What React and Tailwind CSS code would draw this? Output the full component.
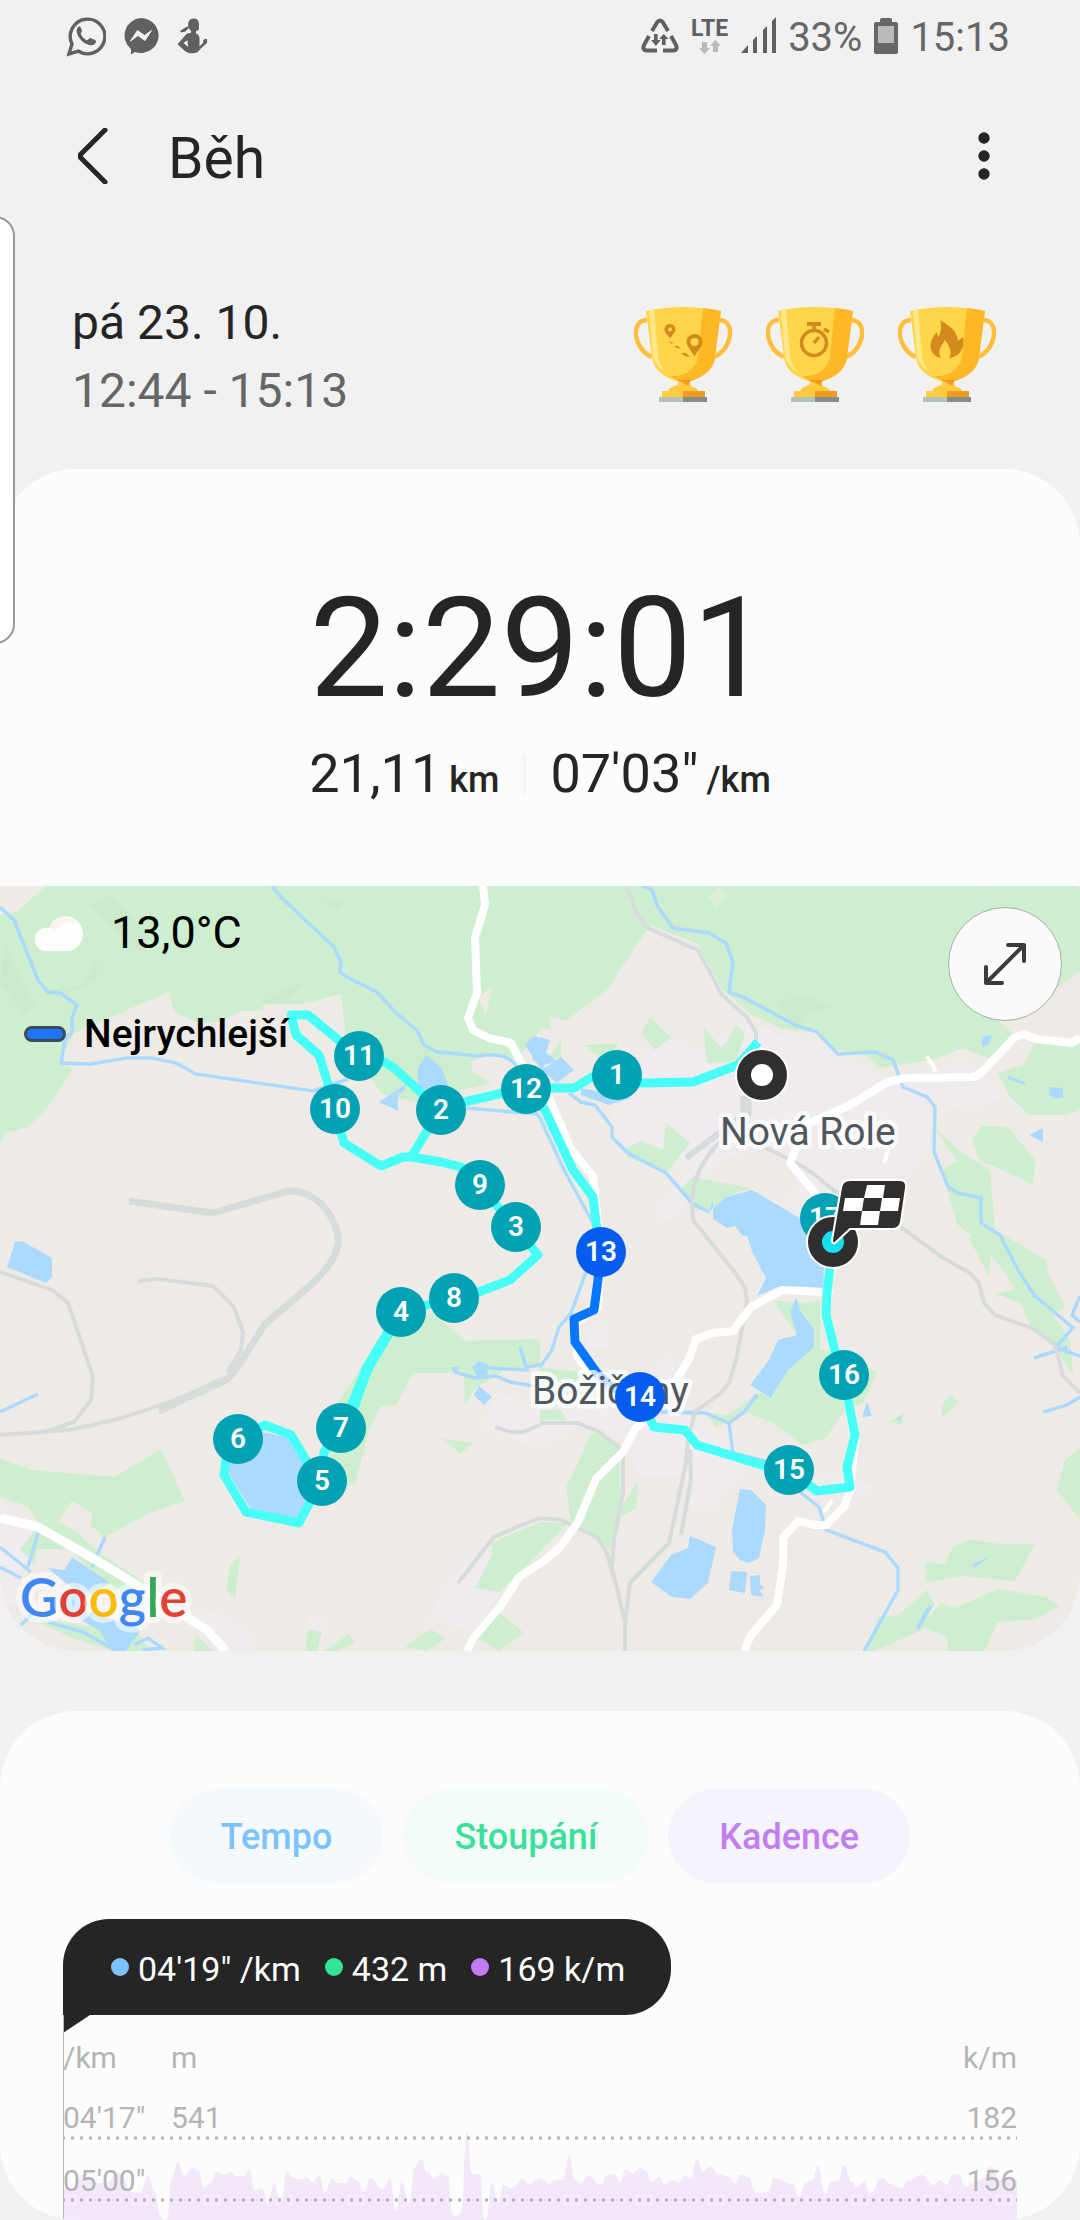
import React from 'react';

const markers = [
  { n: 11, x: 358, y: 1056 },
  { n: 10, x: 334, y: 1109 },
  { n: 2, x: 440, y: 1110 },
  { n: 12, x: 525, y: 1089 },
  { n: 1, x: 616, y: 1075 },
  { n: 9, x: 479, y: 1185 },
  { n: 3, x: 515, y: 1227 },
  { n: 4, x: 400, y: 1312 },
  { n: 8, x: 453, y: 1298 },
  { n: 7, x: 340, y: 1428 },
  { n: 6, x: 237, y: 1439 },
  { n: 5, x: 321, y: 1481 },
  { n: 13, x: 600, y: 1252, fast: true },
  { n: 14, x: 639, y: 1397, fast: true },
  { n: 15, x: 788, y: 1470 },
  { n: 16, x: 843, y: 1375 },
  { n: 17, x: 824, y: 1218 },
];

const cadence = [
  63, 2188, 71, 2188, 83, 2175, 96, 2183, 105, 2183, 119, 2173, 133, 2192, 140, 2193, 148, 2176, 155, 2192, 160, 2215, 164, 2220,
  167, 2219, 172, 2177, 178, 2162, 184, 2175, 193, 2168, 198, 2170, 204, 2188, 210, 2183, 217, 2172, 224, 2175, 230, 2172, 236, 2176,
  244, 2176, 249, 2170, 255, 2190, 262, 2189, 268, 2203, 274, 2184, 281, 2202, 287, 2171, 293, 2178, 301, 2179, 306, 2177, 313, 2182,
  319, 2175, 325, 2192, 332, 2179, 339, 2183, 345, 2183, 351, 2177, 357, 2180, 364, 2192, 370, 2177, 383, 2189, 390, 2179, 396, 2211,
  402, 2182, 409, 2203, 415, 2167, 421, 2159, 427, 2172, 434, 2179, 442, 2173, 448, 2176, 452, 2212, 455, 2217, 461, 2213, 467, 2132,
  472, 2174, 480, 2174, 484, 2219, 486, 2219, 492, 2183, 498, 2203, 504, 2185, 511, 2188, 523, 2179, 529, 2184, 540, 2178, 550, 2184,
  555, 2180, 563, 2180, 569, 2156, 575, 2180, 581, 2183, 588, 2176, 601, 2185, 607, 2175, 614, 2174, 620, 2182, 626, 2169, 633, 2173,
  640, 2168, 646, 2171, 652, 2182, 659, 2177, 665, 2184, 672, 2180, 678, 2183, 685, 2176, 691, 2179, 697, 2159, 703, 2172, 710, 2167,
  719, 2174, 729, 2177, 735, 2183, 741, 2175, 748, 2177, 756, 2192, 762, 2193, 768, 2192, 774, 2178, 793, 2184, 799, 2197, 806, 2182,
  812, 2180, 818, 2166, 825, 2194, 831, 2182, 838, 2181, 844, 2165, 852, 2182, 857, 2187, 864, 2181, 870, 2193, 882, 2178, 891, 2184,
  902, 2188, 908, 2181, 921, 2175, 934, 2185, 940, 2180, 947, 2185, 953, 2174, 959, 2175, 965, 2187, 976, 2182, 984, 2177, 991, 2166,
  1000, 2180, 1005, 2178, 1017, 2180,
];

const areaPath = (values) => {
  let d = `M${values[0]} 2220V${values[1]}`;
  for (let i = 2; i < values.length; i += 2) {
    const mid = (values[i - 2] + values[i]) / 2;
    d += `C${mid} ${values[i - 1]} ${mid} ${values[i + 1]} ${values[i]} ${values[i + 1]}`;
  }
  return `${d}V2220Z`;
};

const WhatsApp = () => (
  <svg width="40" height="42" viewBox="66 16 40 42" fill="none" aria-hidden="true">
    <path d="M69 55l3-10a17.300 17.300 0 1 1 6.500 7.200z" stroke="#606060" strokeWidth="3.400" />
    <path d="M78 28.500c-2 1.700-1.800 5 .3 8.700 3 5.200 7.500 8.500 12.500 9 2.500.2 5-1.500 5.200-3.500.1-1-.5-1.500-1.500-2l-3.600-1.500c-1-.4-1.500 0-2.200.9-.8 1-1.500 1.400-2.500.8-2.300-1.300-4-3.200-5.200-5.500-.5-1 0-1.500.5-2.300.5-.7.6-1.200.2-2l-1.300-3c-.6-1.200-1.300-1-2.400.4z" fill="#606060" />
  </svg>
);

const Messenger = () => (
  <svg width="38" height="40" viewBox="121 17 38 40" aria-hidden="true">
    <path d="M140 19a17.700 17.500 0 1 1-6 34l-4 2.500v-5.500A17.700 17.500 0 0 1 140 19z" fill="#606060" />
    <path d="M129.500 42l7-10.500 7 5 7-5-6.500 10-7-5z" fill="#f1f1f1" stroke="#f1f1f1" strokeWidth="1" strokeLinejoin="round" />
  </svg>
);

const Athlete = () => (
  <svg width="32" height="38" viewBox="178 18 32 38" aria-hidden="true" fill="#606060">
    <path d="M195.500 19.500c4 0 5.500 2.500 5.500 5.500v4c0 2-1 3-3 3v2.500c2.500 1 3.500 2.500 3.500 5v8l4-4-.6-2 2.200-1.700 2 .5v3.500l-7 6.500c-1.500 2.500-4 4-7.500 4s-5.500-.5-8-2.500l-7-6.500 9-10.500 4.500-1v-2c-2-1-3-3-3-6 0-3.500 2-6.300 5.400-6.300z" />
    <path d="M182 32l6-4 4-.5-4.500 5-4.500 1z" />
    <path d="M185.500 44l3.800-3 .9 7z" fill="#f1f1f1" />
  </svg>
);

const DataSaver = () => (
  <svg width="38" height="36" viewBox="638 19 38 36" fill="none" aria-hidden="true">
    <g stroke="#606060" strokeWidth="4">
      <path d="M649 32l5-8.500q3-4 6 0l5 8.500" />
      <path d="M646 37l-5 9q-2 5 2.500 5.500H654" />
      <path d="M668 37l5 9q2 5-2.500 5.500H660" />
    </g>
    <path d="M651 35h3.600v6h3l-4.700 6-4.800-6h2.900zM659 46h3.600v-6h3l-4.800-5-4.700 5h2.900z" fill="#606060" />
  </svg>
);

const Signal = () => (
  <svg width="36" height="38" viewBox="740 17 36 38" fill="#606060" aria-hidden="true">
    <path d="M741 53l7-8v8zM753 40l4-4v17h-4zM763 30l4-4v27h-4zM772 21l4-4v36h-4z" />
  </svg>
);

const Battery = () => (
  <svg width="24" height="36" viewBox="874 18 24 36" aria-hidden="true">
    <path d="M880 22v-2q0-2 2-2h8q2 0 2 2v2h4q2 0 2 2v28q0 2-2 2h-20q-2 0-2-2V24q0-2 2-2z" fill="#666" />
    <path d="M878 26h16v17h-16z" fill="#bababa" />
  </svg>
);

const Trophy = ({ label, children }) => (
  <svg width="98" height="96" viewBox="0 0 98 96" role="img" aria-label={label}>
    <path d="M13 13C-4 13-1 42 18 50M85 13c17 0 14 29-5 37" fill="none" stroke="#ffbf3c" strokeWidth="4.500" />
    <path d="M44 72h12q-2 7 4 9H40q5-2 4-9z" fill="#ffb726" />
    <path d="M42 72l14 9H40q5-2 4-7z" fill="#ffd54a" />
    <path d="M12 4Q49-4 87 4L81 50C80 63 68 71 56 74H43C31 71 19 63 18 50z" fill="#ffd54a" />
    <path d="M69 1q10 1 18 3L81 50C80 63 68 71 56 74H44l-8-5C53 70 63 60 64 49z" fill="#ffb726" />
    <path d="M15 3l5-.5 4 46q1 10 9 17-12-6-14-17z" fill="#ffe88c" />
    <path d="M43 73h14l-3 5z" fill="#ee9a22" />
    <path d="M34 84q2-5 11-6 5-1 10 1 8 1 9 5z" fill="#ffc93f" />
    <path d="M28 84h21v6H28z" fill="#ffcc3d" />
    <path d="M49 84h22v6H49z" fill="#f29a22" />
    <path d="M25 90h24v5H25z" fill="#b5c0bb" />
    <path d="M49 90h24v5H49z" fill="#858d88" />
    {children}
  </svg>
);

const Map = () => (
  <svg viewBox="0 886 1080 765" className="block h-auto w-full" role="img" aria-label="Mapa trasy">
    <path d="M0 886h1080v765H0z" fill="#eeebe6" />

    {/* Built-up areas */}
    <g fill="#efebef">
      <path d="M750 1022l33 15 32 3 64 36 19 0 38-6 27-11 38 31v8l-34 15-38-15v45l-18 32-46 5-21 23-31 27-17 5-38-21-61-20-28 28-15-6 35-48-64-15-14-35 31-35v-28l24-18 28 15z" />
      <path d="M953 1030h12l-7 23h-9z" />
      <path d="M540 1407l83-7 10-23 38-20 12 25-19 28 31 7 24 16 34 34-20 16-21 27-20 3-7-38-45 2-17-40-38-14-45 27-58-23 17-34z" />
      <path d="M585 1330l20-7 4 24-21 3zM815 1473l61 12-26 15-8-12z" />
      <path d="M482 1550l10 3 7 40-24 40-48-13 21-37zM193 1617l20-7 35 20 9 21h-30zM310 1613l22 9-12 21-12-14zM0 1505l17 12 33 10-14 25-19 20 4 30-21 5z" />
    </g>
    <path d="M726 1157l38-7 24 13 12 27-19 13-31-13-28-10-27 13 12-22z" fill="#eeebe6" />

    {/* Forests and parks */}
    <g fill="#cdeecf">
      <path d="M47 886L26 903 17 912 0 914V1145l5-12 23-6 20-20 24-37-10-12 12-25 46-20 49-21 5 20 21 10h24l22-11h22v-7h40l38-10 5 40 2 22 17 13 17 25 33 8 80-20-22-8-2-12 14-6 32 3 23-28v-2h10v-12l17 3 40-30 43-65 48 19 24 45 28 25 33 15 32 3 18 17 32 5 14 14 19-3 38-6 27-11 30 12 19-27-33-30 20-25 55 12 44-32v-6l-13-9 13-8v-57l-19 12-5-25 4-14h-55l-4 4-13 7-7 13-20 12-8-5 9-14-4-14z" />
      <path d="M1080 1040l-44-2-12 27-26 8 12 24 19 18h38l13-5z" />
      <path d="M650 1018l21 19-16 13-13-17zM703 1027l18 21 7-8 8-15 9 8-9 29-29 1zM583 1045l36-1-14 16zM561 1039v18l-14 4zM666 1123l24 20-23 29-41-15v-9l16-7 21 9zM693 1177l57 11-24 9-17 15-16-5-14-17z" />
      <path d="M934 1127l24 23 32 20 5 60 51 30 2 13 17 34-12 8 17 25 3 35-10-15-13-20-18-12-12-26-23-8 19-5-14-20-20-25-25-20-15-55 16-8zM977 1228l14 15-2 34-20-39zM972 1140l10-14 26 1 27 33-2 25-35-17-19-8z" />
      <path d="M382 1335l50-23 33 29 75-2v27l-37 5-28 18-10 15-1-30-11-1h-40l-17 32-14 1-12 21-15 58-22 2-13-57z" />
      <path d="M540 1367l45 6 20 12-18 10-47-15zM540 1410h21l5 10h-26zM441 1438l32 5-12 11z" />
      <path d="M592 1432l27 11 2 60-9 49-20-19-21-11-5-34zM540 1522l28 1-28 29-41 40-24-4 17-33v-12zM603 1503l19 4 16-27-2 29-25 12zM499 1612l25 21-25 18-24-14zM430 1629l16 9-18 13-23-4zM348 1634l7 8-18 9h-13zM308 1629l14 3-5 19h-12zM240 1556l-5 43-9-9 4-25zM196 1635l17 16h-20z" />
      <path d="M0 1458l31 12 84 7 46-28 24 52-33 11-47 25-15-12 3-12-21-12-14 20 19 12 22 19 71 48h-47l-54-51h-32l-2 17-15-17 20-25-12-18-38-12z" />
      <path d="M26 1617l112 16 13 18h-38l-40-13z" />
      <path d="M774 1300l30 3 16-3v50l16 2 31 15 10 5-13 30-21 10-17 26-24 7-28-22-27-10-31 14-11-14 24 2 28-22 17 3 26-55z" />
      <path d="M1080 1448l-15 12-8 30 23 30zM950 1394l8 8-15 16-2-11zM888 1423l16-11-2 12zM996 1294l21-5 12 24 41 34 3 28-23-35-18-12-12-26z" />
      <path d="M969 1539l31 5h35l-20 37-55-5-35 7 1-21 19 2 8-17zM879 1617l19-2 29-25 7 13-12 27-47 21h-10zM941 1603l14 5 43-19 48 8 14 9-24 13-38 3-14 29h-36l-1-14-28-11z" />
    </g>
    <path d="M492 986l-6 30-7-18zM471 1070l14-6 32 3-18 21z" fill="#eeebe6" />
    <path d="M708 897l10-10 11 6-13 15z" fill="#dbeedb" />
    <g fill="#c8e8ca" opacity=".6">
      <path d="M90 905l20-10 38 40-10 15zM83 985l14-25v20l-39 18-10-8zM5 945l30 60-10 10-25-30zM260 1005l25-18 20-4-15 15zM320 900h24l-5 10zM776 1000l35-2 20 9-25 6-10 18z" />
    </g>

    {/* Lakes and ponds */}
    <g fill="#acdaff">
      <path d="M709 1212l17-15 26-7 46 27 27 26-2 46-45-2-21 9 9-18-6-11-8-16-5-15-4 0-8-10-8 2-14-9v-20z" />
      <path d="M796 1298l5 14 13 18v17l-26 23-17 28-21-13 19-25 9-20 19-5-7-23zM740 1489l11 1 15 15-1 25-6 28-10 5-9-3-7-8-1-22zM690 1536l26 11-8 36-18 16-18-2-21-15 20-27 17-7zM731 1571l16 1-2 21-16-3zM750 1576l10-1v9l4 4-5 2 5 7-13-2z" />
      <path d="M262 1432l28 6 31 42-9 28-16 12-46-12-26-42zM22 1241l30 17v19l-6 6-39-16 8-25zM426 1055l15 12 9 22-30 10-3-29z" />
      <path d="M379 1102l27-18-2 7-6 3v17zM525 1045l9-9 6 2v22l5 8 16-11 13 13-17 13-17-15zM581 1088l50 10-22 7-28-10zM540 1037l10 3-4 12 10 9-14 5-10-6z" />
      <path d="M982 1037l10-2-4 10-6 2zM1008 1076l17 6v3l-17-6zM1050 1087l13 1v9l-7 2-7-4zM1029 1135l14-7v14zM867 1402l5 14-10 1zM972 1564l17-7-14 10zM934 1604l-15 26-3-2 10-20zM472 1367l7-6 10 4-2 10-8 5zM479 1386l13 11-8 8-10-10zM451 1367h8l-4 8z" />
      <path d="M48 1568l17 2 7-13 38 26-22 13-2 14 55 20-15 21h-14l-12-20-36-21 8-22zM896 1420l6-5-2 5z" />
    </g>

    {/* Rivers */}
    <g fill="none" stroke="#acdaff" strokeWidth="3.500">
      <path d="M0 907l14 13 24 60 10 12 12 1 17 12-5 13v14l-7 8-4 23 30 1 35-6 26 0 24 5 20 11 117 17 35-12" />
      <path d="M272 886l10 12 52 49 7 15-1 10 7 5 30 15 19 21 21 17 7 15 13 7 43 4q25-5 37 10" />
      <path d="M467 1108l70 6 3 4 24 52 31 57 0 23-10 25-14 38-12 14-7 23-12 17" />
      <path d="M643 886l9 4 5 15 16 23 36 5 17 10 7 19-4 30 14 5 52 28 22 7 21 22 37-2 18 8 10 27 24 10 8 10-1 45 14 35 10 6 23 5v25l19 12 18 35 16 25 39 33-17 19 41 16M1034 1358l33-11M1080 1296l-8 19 8 7M1043 1412l24-7 13-8" />
      <path d="M569 1093l12 9 14 3 17 22v10l16 16 38 20 26 30 17 9" />
      <path d="M661 1412l44 1 24 10 14-10 14-18M729 1423l4 30 55 14M800 1492l19 15 7 23 59 22 13 16v22l-34 61M0 1412l38-18" />
      <path d="M455 1372l20 6 21-2 14 6 30 5M489 1368l38 2-7-23M527 1367l13-2M0 1547l31 25M0 1567l21 11M38 1533l-10 34M105 1537l-13 30M21 1625l13-13M48 1622l35 10 32 18M134 1645l14-7 14 10-20 2" />
    </g>

    {/* Railways */}
    <g fill="none" stroke="#d6dbdc" strokeWidth="4">
      <path d="M626 886l7 16 3 11 12 15 50 22 24 45 25 22 9 16v10M746 1117v-8M746 1120q-50 35-54 77l1 23 40 50 12 17 2 16-11 57-7 23-8 10-26 19-7 28-2 23-17 80-39 40-5 40v28M690 1450l1 30-10 55" />
      <path d="M764 1147l28 14q15 6 41 29l72 40 38 28 26 14 10 11 5 20 11 12 37 13 23 17 8 31 17 17" />
      <path d="M540 1423h38l21 9 24 18v43l-9 47-2 27 13 56M540 1518l21 2 36 17 10 16 7 25M540 1518l-23 9-23 10-36 46" />
      <path d="M0 1272l52 18 16 13 25 74-2 23-17 22-29 10M138 1281l20-2 55 7 21 21 9 25-2 18-14 23M495 1427l15 5 13 0 17-7" />
      <path d="M0 1435l69-5q80-15 155-52" />
      <path d="M686 1158l60-45" strokeWidth="6" />
      <path d="M746 1096v20" strokeWidth="11" />
      <path d="M129 1201l84 12 75-22q22-1 38 18 14 20 12 35-3 20-32 45l-41 35-27 42q-5 10-14 15l-65 30" strokeWidth="7" />
    </g>

    {/* Roads */}
    <g fill="none" stroke="#fff" strokeWidth="8" strokeLinejoin="round">
      <path d="M483 886l2 19-10 33 2 55-9 25 5 12 16 8 22 5 12 24 24 26 24 56 22 27 8 76-3 55-22 16 1 33 25 34" />
      <path d="M1080 1038l-8 5-36-4-12-5-9 3-34 36-7 4-69 1-17 4-38 23-45 20-15 38 25 30 22 50-10 49-45-2-31 17-18 24-20 2-17 6-7 20-14 23-21 29-19 18-12 23-27 27-18 43-17 24-17 15-25 16-19 30-26 30-7 14" />
      <path d="M829 1290l-4 25 18 65 12 60-5 50-6 17-18 18h-11l-17-4-15 17v27l-6 40-26 30-7 16" />
      <path d="M0 1518l38 9 58 33 49 30 62 40 19 21" strokeWidth="9" />
      <path d="M927 1056l9 15M888 1150l-4 13M832 1500l-8 12" strokeWidth="4" />
    </g>

    {/* Route */}
    <g fill="none" stroke="#48fff7" strokeWidth="9" strokeLinejoin="round">
      <path d="M758 1042l-20 23-45 17-50 1h-27l-24-6-18 11h-49l-39 9-18 4-28 9-29 47" />
      <path d="M440 1110l-47-43-9-5-26-6-50-41h-17l5 20 23 20 10 32 5 22 10 34 37 23 22-9 8 0 30 5 20 5 18 18 36 42 23 28-28 25-31 12-26 6-53 14-32 55-13 38-15 23-16 24-3 29-22 42-53-11-22-37 2-15 11-21 28-14 26 10 17 28 13 18" />
      <path d="M525 1089l20 21 28 60 20 27 4 33 4 22M639 1397l15 30 31 3 12 15 65 20 26 5 29 21 33-4-3-20 8-32-7-35-7-25-15-60 1-22 3-26v-25" />
      <path d="M396 1320l-28 47-17 42" strokeWidth="11" />
    </g>
    <path d="M600 1252l-2 28-4 30-20 9 1 23 22 31 14 14 28 10" fill="none" stroke="#0876ff" strokeWidth="9" strokeLinejoin="round" />

    <g fill="#50585f" stroke="#fff" strokeOpacity=".75" strokeWidth="9" strokeLinejoin="round" className="font-[Roboto,sans-serif]" style={{ paintOrder: 'stroke' }}>
      <text x="720" y="1145" fontSize="39">Nová Role</text>
      <text x="532" y="1404" fontSize="39">Božičany</text>
    </g>

    {/* Kilometre markers */}
    {markers.map((m) => (
      <g key={m.n}>
        <circle cx={m.x + 1} cy={m.y} r="25" fill={m.fast ? '#055cef' : '#00a2b3'} />
        <text x={m.x + 1} y={m.y + 9} textAnchor="middle" fontSize="28" fill="#fff" className="font-[Roboto,sans-serif] font-semibold">{m.n}</text>
      </g>
    ))}

    <circle cx="762" cy="1075" r="18" fill="#fff" stroke="#fff" strokeWidth="18" />
    <circle cx="762" cy="1075" r="18" fill="#fff" stroke="#2f2f2f" strokeWidth="14" />
    <circle cx="833" cy="1242" r="18" stroke="#fff" strokeWidth="18" />
    <circle cx="833" cy="1242" r="18" fill="#18def0" stroke="#2f2f2f" strokeWidth="14" />
    <path d="M850 1180h50q7 0 6 8l-5 34q-1 7-8 7h-43l-15 14q-3 1-3-3l9-52q1-8 9-8z" fill="#2f2f2f" stroke="#fff" strokeWidth="2" />
    <path d="M867 1185h18l-2 13h17l-2 13h-18l-2 14h-18l2-14h-19l2-13h19zM864 1198l-2 13h18l2-13z" fill="#fff" fillRule="evenodd" />

    <text x="20" y="1617" fontSize="53" stroke="#fff" strokeOpacity=".55" strokeWidth="12" strokeLinejoin="round" className="font-[Lato,sans-serif] font-semibold" style={{ paintOrder: 'stroke' }}>
      <tspan fill="#4285f4">G</tspan>
      <tspan fill="#e34133">o</tspan>
      <tspan fill="#fabb05">o</tspan>
      <tspan fill="#4285f4">g</tspan>
      <tspan fill="#34a853">l</tspan>
      <tspan fill="#e34133">e</tspan>
    </text>
  </svg>
);

const StatusBar = () => (
  <div className="flex h-[72px] items-center justify-between pl-[66px] pr-[70px] text-[40px] leading-none text-[#666]">
    <div className="flex items-center gap-4">
      <WhatsApp />
      <Messenger />
      <Athlete />
    </div>
    <div className="flex items-center">
      <DataSaver />
      <div className="ml-3 flex flex-col items-center">
        <span className="text-[23px] font-bold leading-[22px] text-[#606060]">LTE</span>
        <svg width="22" height="14" viewBox="0 0 22 14" fill="#bababa" aria-hidden="true">
          <path d="M3 2h5v6h3l-5.500 6L0 8h3zM14 12h5V6h3l-5.500-6L11 6h3z" />
        </svg>
      </div>
      <div className="ml-3"><Signal /></div>
      <span className="ml-3 pt-1">33%</span>
      <div className="ml-3"><Battery /></div>
      <span className="ml-3 pt-1">15:13</span>
    </div>
  </div>
);

const metrics = [
  { label: 'Tempo', style: 'bg-[#f4f9fd] text-[#7cc3fb]' },
  { label: 'Stoupání', style: 'bg-[#f3fcf9] text-[#3be19b]' },
  { label: 'Kadence', style: 'bg-[#f5f3fc] text-[#c27ef0]' },
];

const readings = [
  { value: '04\'19" /km', dot: 'bg-[#7cc3ff]' },
  { value: '432 m', dot: 'bg-[#31e49a]' },
  { value: '169 k/m', dot: 'bg-[#c47cf5]' },
];

const App = () => {
  return (
    <main className="relative overflow-hidden bg-[#f1f1f1] font-[Roboto,sans-serif] text-[#252525]">
      <StatusBar />

      {/* Edge panel handle */}
      <div className="absolute left-[-30px] top-[216px] z-10 h-[428px] w-[45px] rounded-[20px] border-2 border-[#999] bg-white"></div>

      <header className="flex h-[168px] items-center pl-[73px] pr-[72px]">
        <button type="button" aria-label="Zpět" className="flex h-16 w-10 items-center justify-center">
          <svg width="30" height="56" viewBox="0 0 30 56" fill="none" stroke="#252525" strokeWidth="5" strokeLinecap="round" strokeLinejoin="round">
            <path d="M27 2L3 26q-2 2 0 4l24 24" />
          </svg>
        </button>
        <h1 className="ml-[55px] pt-1 text-[57px] leading-none">Běh</h1>
        <button type="button" aria-label="Další možnosti" className="ml-auto flex h-16 w-12 items-center justify-center">
          <svg width="12" height="50" viewBox="0 0 12 50" fill="#252525">
            <circle cx="6" cy="7" r="5.700" />
            <circle cx="6" cy="25" r="5.700" />
            <circle cx="6" cy="43" r="5.700" />
          </svg>
        </button>
      </header>

      <section className="flex items-center justify-between pb-11 pl-[72px] pr-[84px] pt-[49px]">
        <div className="text-[48px] leading-[68px]">
          <p>pá 23. 10.</p>
          <p className="text-[#666]">12:44 - 15:13</p>
        </div>
        <div className="flex gap-[34px] pb-1">
          <Trophy label="Vzdálenost">
            <g fill="#d28a1f">
              <path d="M36 17a5.500 5.500 0 0 0-5.500 5.500c0 3 3 5 5.500 9 2.500-4 5.500-6 5.500-9A5.500 5.500 0 0 0 36 17zm0 3.500a2 2 0 1 1 0 4 2 2 0 0 1 0-4zM60.500 27a8 8 0 0 0-8 8c0 5 5 8 8 15 3-7 8-10 8-15a8 8 0 0 0-8-8zm0 4a4 4 0 1 1 0 8 4 4 0 0 1 0-8z" fillRule="evenodd" />
              <path d="M34 34l5 2-1 1zM40 39l4 0 3 3-4-1zM47 46l5 0 4 4-5-1z" />
            </g>
          </Trophy>
          <Trophy label="Čas">
            <g fill="none" stroke="#d28a1f" strokeWidth="3.500">
              <circle cx="48" cy="36" r="12.500" />
              <path d="M48 22v-3M48 36l5-6M58 22l5 3" />
              <path d="M41 17h14" strokeWidth="4" />
            </g>
          </Trophy>
          <Trophy label="Kalorie">
            <path d="M42 13c10 6 17 11 18 21l5-4c2 11-3 20-14 21 4-6 0-12-4-18-4 6-8 12-4 18-13-3-13-17-4-26l1 5c3-4 4-10 2-17z" fill="#d28a1f" />
          </Trophy>
        </div>
      </section>

      <section className="overflow-hidden rounded-[76px] bg-[#fcfcfc]">
        <div className="flex flex-col items-center pb-20 pt-[109px]">
          <p className="text-[140px] leading-none">2:29:01</p>
          <div className="mt-6 flex items-center text-[54px] leading-[64px]">
            <p className="flex items-baseline gap-2"><span>21,11</span><span className="text-4xl font-medium">km</span></p>
            <div className="mx-6 h-10 w-[3px] bg-[#f5f5f5]"></div>
            <p className="flex items-baseline gap-2"><span>07'03"</span><span className="text-4xl font-medium">/km</span></p>
          </div>
        </div>

        <div className="relative text-black">
          <Map />
          <div className="absolute left-8 top-[21px] flex items-center gap-7">
            <svg width="51" height="35" viewBox="0 0 51 35" aria-hidden="true">
              <path d="M12 35A11.500 11.500 0 1 1 17 12 17.500 17.500 0 1 1 37 35z" fill="#fdfdfc" />
              <path d="M17 12a17 17 0 0 1 12-11q10 0 14 5-12-2-20 10-2-3-6-4z" fill="#f7f4f2" />
            </svg>
            <p className="text-[45px] leading-[52px]">13,0°C</p>
          </div>
          <div className="absolute left-6 top-[124px] flex items-center gap-[18px]">
            <span className="h-4 w-[42px] rounded-full border-[3px] border-[#3c4a5c] bg-[#1f74fb]"></span>
            <p className="text-[39px] font-medium leading-[48px]">Nejrychlejší</p>
          </div>
          <button type="button" aria-label="Zvětšit mapu" className="absolute right-[18px] top-[21px] flex h-[114px] w-[114px] items-center justify-center rounded-full border border-[#aaa] bg-[#fafafa]">
            <svg width="46" height="46" viewBox="0 0 46 46" fill="none" stroke="#3c3c3c" strokeWidth="4" strokeLinecap="round" strokeLinejoin="round">
              <path d="M5 41L41 5M26 4h16v16M4 26v16h16" />
            </svg>
          </button>
        </div>
      </section>

      <section className="mt-[60px] overflow-hidden rounded-[76px] bg-[#fcfcfc] px-[63px] pt-[78px]">
        <div className="flex justify-center gap-5 text-4xl font-medium">
          {metrics.map((m) => (
            <button key={m.label} type="button" className={`h-[94px] rounded-full px-[51px] pt-[2px] ${m.style}`}>{m.label}</button>
          ))}
        </div>

        <div className="relative mt-9 flex h-24 w-fit items-center gap-6 rounded-[46px] rounded-bl-none bg-[#252525] pl-12 pr-[46px] text-[34px] text-white">
          {readings.map((r) => (
            <div key={r.value} className="flex items-center gap-[9px]">
              <span className={`h-[18px] w-[18px] rounded-full ${r.dot}`}></span>
              <span className="pt-1">{r.value}</span>
            </div>
          ))}
          <svg width="27" height="18" viewBox="0 0 27 18" className="absolute left-0 top-full" aria-hidden="true">
            <path d="M0 0h27L0 18z" fill="#252525" />
          </svg>
        </div>

        <div className="relative pb-[19px] pt-[23px] text-[30px] leading-10 text-[#b4b4b4]">
          <svg viewBox="63 2100 954 120" preserveAspectRatio="none" className="absolute bottom-0 left-0 h-[120px] w-full" aria-hidden="true">
            <path d={areaPath(cadence)} fill="#f3e8fa" />
            <path d="M63 2138h954M63 2200h954" stroke="#b6b0b9" strokeWidth="3" strokeDasharray="3 6" strokeDashoffset="1" />
          </svg>
          <div className="absolute bottom-0 left-0 top-0 w-px bg-[#b9b9c0]"></div>
          <div className="relative flex"><span className="w-[108px]">/km</span><span>m</span><span className="ml-auto">k/m</span></div>
          <div className="relative mt-5 flex"><span className="w-[108px]">04'17"</span><span>541</span><span className="ml-auto">182</span></div>
          <div className="relative mt-[23px] flex"><span>05'00"</span><span className="ml-auto">156</span></div>
        </div>
      </section>
    </main>
  );
};

export default App;
